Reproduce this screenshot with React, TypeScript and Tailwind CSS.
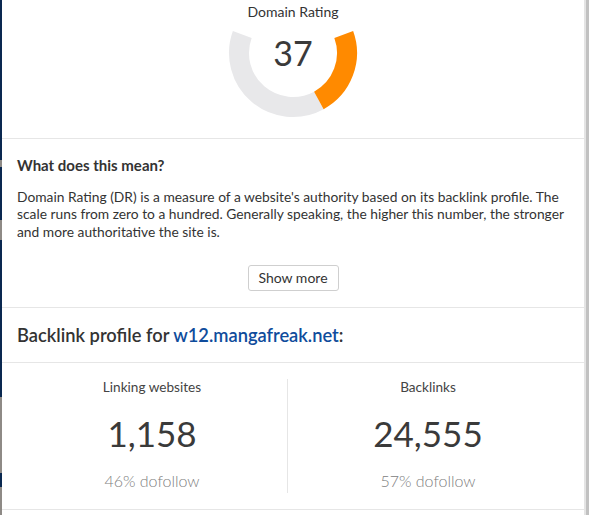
import React from "react";

function Gauge() {
  return (
    <div className="relative w-[130px] h-[98px]">
      <svg width="130" height="98" viewBox="0 0 130 98" className="block">
        <path
          d="M 90.85 80.41 A 54 54 0 0 1 14.26 14.53"
          fill="none"
          stroke="#e8e8ea"
          strokeWidth="20"
        />
        <path
          d="M 115.74 14.53 A 54 54 0 0 1 90.85 80.41"
          fill="none"
          stroke="#ff8a00"
          strokeWidth="20"
        />
      </svg>
      <div className="absolute left-0 right-0 top-[13px] text-center text-[34px] leading-[40px] text-[#3a3a3a]">
        37
      </div>
    </div>
  );
}

function Stat({ label, value, sub, className }: { label: string; value: string; sub: string; className: string }) {
  return (
    <div className={"flex flex-col items-center h-[114px] " + className}>
      <div className="text-[13.6px] leading-[17px] text-[#444]">{label}</div>
      <div className="mt-[16px] text-[35px] leading-[42px] text-[#3a3a3a]">{value}</div>
      <div className="mt-[17px] text-[16px] leading-[19px] font-light text-[#808080]">{sub}</div>
    </div>
  );
}

export default function App() {
  return (
    <div className="flex w-[589px] h-[515px] overflow-hidden bg-white font-['Lato',sans-serif]">
      <div className="w-[2px] flex flex-col shrink-0">
        <div className="h-[160px] bg-[#0a2850]" />
        <div className="h-[7px] bg-[#8e8a86]" />
        <div className="h-[53px] bg-[#0a2850]" />
        <div className="h-[20px] bg-[#8e8a86]" />
        <div className="h-[157px] bg-[#0a2850]" />
        <div className="h-[76px] bg-[#8e8a86]" />
        <div className="h-[14px] bg-[#0a2850]" />
        <div className="flex-1 bg-[#8e8a86]" />
      </div>
      <div className="flex-1 flex flex-col bg-white">
        <div className="h-[139px] shrink-0 flex flex-col items-center pt-[3px] border-b border-[#e6e6e6]">
          <div className="text-[14px] leading-[17px] text-[#333]">Domain Rating</div>
          <Gauge />
        </div>
        <div className="h-[169px] shrink-0 px-[15px] pt-[16px] border-b border-[#e6e6e6]">
          <div className="text-[15px] leading-[20px] font-bold text-[#333]">What does this mean?</div>
          <p className="mt-[12.5px] text-[13.8px] leading-[17.5px] text-[#333]">
            Domain Rating (DR) is a measure of a website's authority based on its backlink profile. The scale runs from
            zero to a hundred. Generally speaking, the higher this number, the stronger and more authoritative the site
            is.
          </p>
          <div className="mt-[25px] flex justify-center">
            <button className="h-[26px] w-[91px] rounded-[3px] border border-[#cfcfcf] bg-white text-[14px] leading-[24px] text-[#333]">
              Show more
            </button>
          </div>
        </div>
        <div className="h-[55px] shrink-0 px-[15px] pt-[16px] border-b border-[#e6e6e6]">
          <div className="text-[18.3px] leading-[22px] font-semibold text-[#333]">
            Backlink profile for <span className="text-[#0f4c9c]">w12.mangafreak.net</span>:
          </div>
        </div>
        <div className="h-[147px] shrink-0 pl-[15px] pr-[16px] pt-[16px] flex border-b border-[#e6e6e6]">
          <Stat label="Linking websites" value="1,158" sub="46% dofollow" className="w-[271px] border-r border-[#e6e6e6]" />
          <Stat label="Backlinks" value="24,555" sub="57% dofollow" className="flex-1" />
        </div>
        <div className="flex-1" />
      </div>
      <div className="w-[2px] bg-[#e4e4e4] shrink-0" />
      <div className="w-[3px] bg-[#c1c1c1] shrink-0" />
    </div>
  );
}
